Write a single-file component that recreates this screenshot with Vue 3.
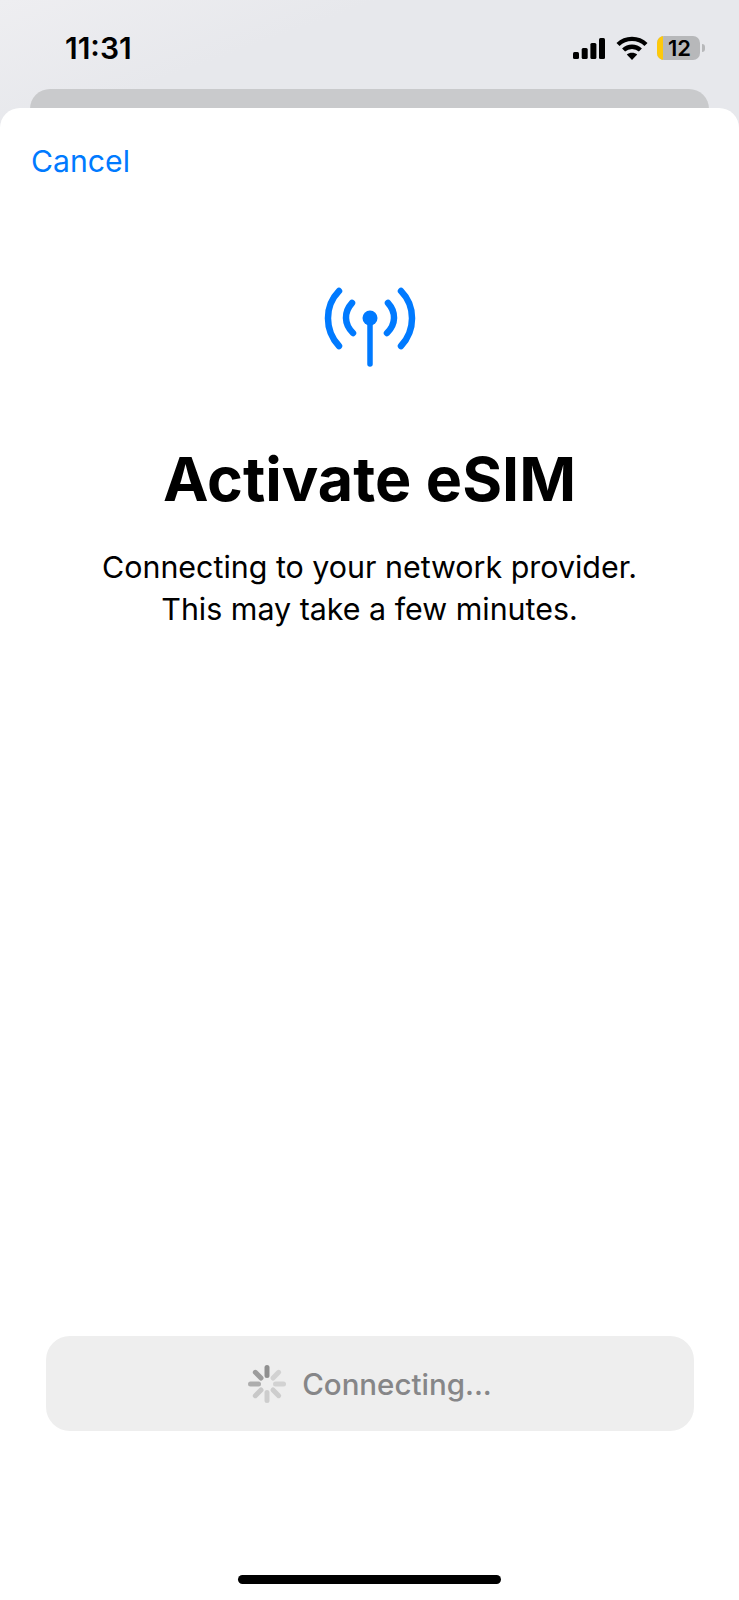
<script setup>
const spokes = [
  { angle: 0, color: "#8f8f8f" },
  { angle: 45, color: "#d2d2d2" },
  { angle: 90, color: "#d2d2d2" },
  { angle: 135, color: "#cdcdcd" },
  { angle: 180, color: "#cdcdcd" },
  { angle: 225, color: "#c8c8c8" },
  { angle: 270, color: "#adadad" },
  { angle: 315, color: "#9c9c9c" },
];
</script>

<template>
  <div class="screen">
    <header class="statusBar">
      <span class="time">11:31</span>
      <div class="statusIcons">
        <svg class="signal" width="32" height="21" viewBox="0 0 32 21" fill="#000">
          <rect x="0" y="14" width="6" height="7" rx="1.5" />
          <rect x="8.7" y="10" width="6" height="11" rx="1.5" />
          <rect x="17.4" y="5" width="6" height="16" rx="1.5" />
          <rect x="26" y="0" width="6" height="21" rx="1.5" />
        </svg>
        <svg class="wifi" width="32" height="24" viewBox="0 0 32 24" fill="none" stroke="#000" stroke-width="4.4">
          <path d="M2 8.5C9.8 1 22.2 1 30 8.5" />
          <path d="M7.6 14C12.3 9.6 19.7 9.6 24.4 14" />
          <path d="M16 24L10.8 18.6C13.6 16.2 18.4 16.2 21.2 18.6Z" fill="#000" stroke="none" />
        </svg>
        <div class="battery">
          <div class="batteryBody">
            <span class="batteryFill"></span>
            <span class="batteryText">12</span>
          </div>
          <span class="batteryCap"></span>
        </div>
      </div>
    </header>

    <div class="backCard"></div>

    <main class="sheet">
      <a class="cancel">Cancel</a>

      <svg class="antenna" width="100" height="90" viewBox="0 0 100 90" fill="none" stroke="#007aff" stroke-linecap="round">
        <path d="M19 5C4.3 20 4.3 44 19 60" stroke-width="6.5" />
        <path d="M81 5C95.7 20 95.7 44 81 60" stroke-width="6.5" />
        <path d="M32 17C23.8 26 23.8 38 33 47" stroke-width="6.5" />
        <path d="M68 17C76.2 26 76.2 38 67 47" stroke-width="6.5" />
        <path d="M50 32V78" stroke-width="5.5" />
        <circle cx="50" cy="32" r="7.5" fill="#007aff" stroke="none" />
      </svg>

      <h1 class="title">Activate eSIM</h1>
      <p class="desc">Connecting to your network provider.<br />This may take a few minutes.</p>

      <div class="connecting">
        <svg class="spinner" width="40" height="40" viewBox="-20 -20 40 40" fill="none" stroke-width="5" stroke-linecap="round">
          <line
            v-for="s in spokes"
            :key="s.angle"
            x1="0"
            y1="-8.5"
            x2="0"
            y2="-16.5"
            :stroke="s.color"
            :transform="`rotate(${s.angle})`"
          />
        </svg>
        <span class="connectingText">Connecting...</span>
      </div>

      <div class="homeBar"></div>
    </main>
  </div>
</template>

<style>
html,
body {
  margin: 0;
  background: #fff;
}
</style>

<style scoped>
.screen {
  width: 739px;
  height: 1600px;
  overflow: hidden;
  display: flex;
  flex-direction: column;
  background: linear-gradient(160deg, #eeeef1 0, #e7e8ec 130px);
  font-family: Inter, "Liberation Sans", sans-serif;
  color: #000;
}
.statusBar {
  height: 89px;
  flex: none;
  box-sizing: border-box;
  padding: 31px 34px 0 65px;
  display: flex;
  justify-content: space-between;
  align-items: flex-start;
}
.time {
  font-size: 30px;
  line-height: 34px;
  font-weight: 600;
}
.statusIcons {
  display: flex;
  align-items: center;
  height: 28px;
  margin-top: 3px;
}
.signal {
  margin-right: 11px;
}
.wifi {
  margin-right: 9px;
}
.battery {
  display: flex;
  align-items: center;
  gap: 2px;
}
.batteryBody {
  width: 43px;
  height: 24px;
  border-radius: 7px;
  overflow: hidden;
  display: flex;
  background: #b7b8ba;
}
.batteryFill {
  width: 6px;
  background: #fdc90b;
}
.batteryText {
  flex: 1;
  padding-right: 4px;
  text-align: center;
  font-size: 22px;
  line-height: 24px;
  font-weight: 600;
}
.batteryCap {
  width: 3px;
  height: 8px;
  border-radius: 0 3px 3px 0;
  background: #b7b8ba;
}
.backCard {
  flex: none;
  height: 40px;
  margin: 0 30px -21px;
  border-radius: 20px 20px 0 0;
  background: #c9cacc;
}
.sheet {
  flex: 1;
  position: relative;
  display: flex;
  flex-direction: column;
  align-items: center;
  border-radius: 20px 20px 0 0;
  background: #fff;
}
.cancel {
  align-self: flex-start;
  margin: 34px 0 0 31px;
  font-size: 30.2px;
  line-height: 38px;
  color: #007aff;
}
.antenna {
  margin-top: 106px;
}
.title {
  margin: 64px 0 0;
  font-size: 61px;
  line-height: 78px;
  font-weight: 700;
}
.desc {
  margin: 28px 0 0;
  font-size: 30.4px;
  line-height: 42px;
  text-align: center;
}
.connecting {
  width: 648px;
  height: 95px;
  margin-top: 706px;
  border-radius: 24px;
  background: #eeeeee;
  display: flex;
  align-items: center;
  justify-content: center;
  gap: 15px;
}
.connectingText {
  font-size: 29.5px;
  font-weight: 500;
  color: #868688;
}
.homeBar {
  width: 263px;
  height: 9px;
  margin-top: auto;
  margin-bottom: 16px;
  border-radius: 5px;
  background: #000;
}
</style>
